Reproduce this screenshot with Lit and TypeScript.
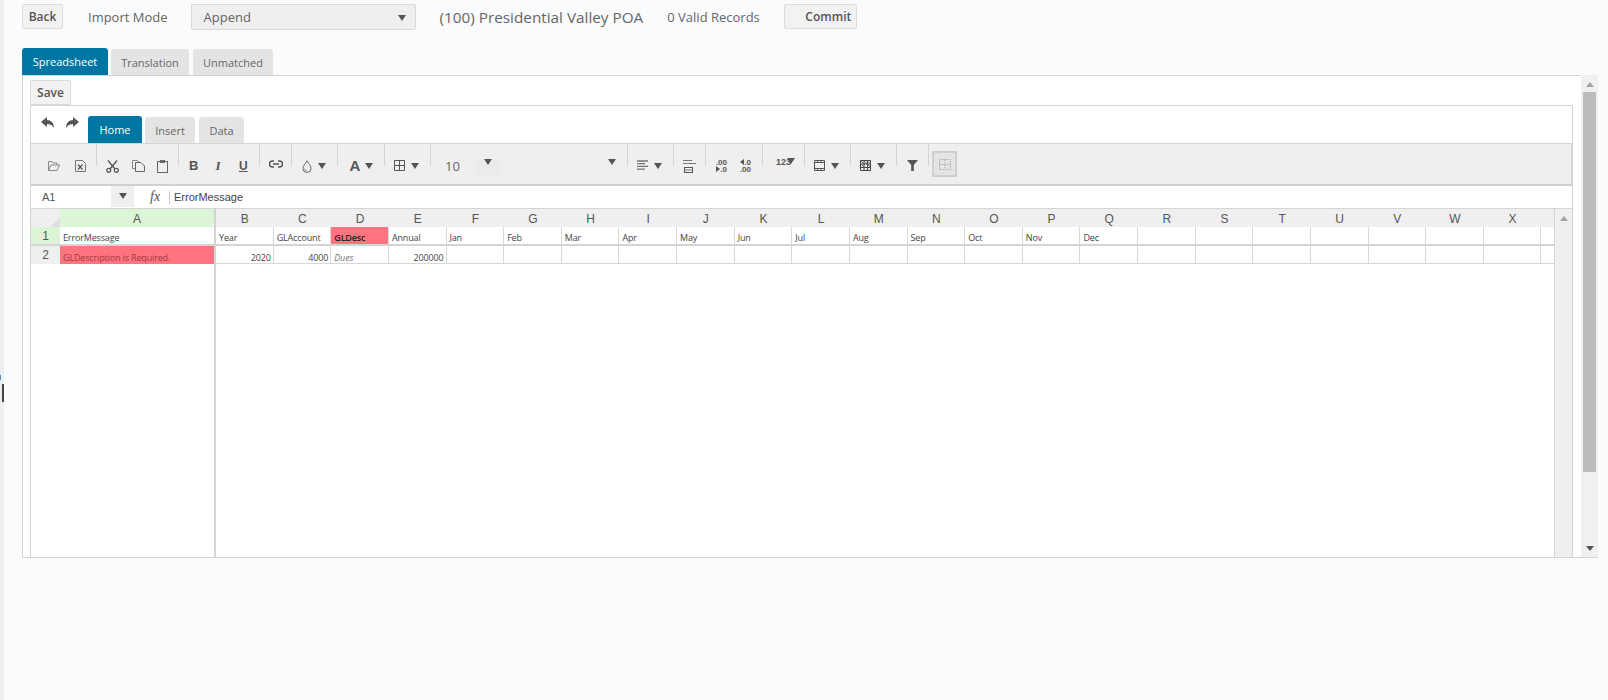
import { LitElement, html, css } from "lit";
import { customElement } from "lit/decorators.js";

const caret = html`<svg class="ic" width="8" height="6" viewBox="0 0 8 6"><path d="M0 0H8L4 6Z" fill="#555"/></svg>`;
const folder = html`<svg class="ic" width="12" height="12" viewBox="0 0 12 12"><path d="M.5 10.5V1.5H4L5 3H9V5M.5 10.5L3 5H11.5L9 10.5Z" fill="none" stroke="#888"/></svg>`;
const excel = html`<svg class="ic" width="11" height="12" viewBox="0 0 11 12"><path d="M.5.5H7.5L10.5 3.5V11.5H.5Z" fill="none" stroke="#777"/><path d="M3 4.5L7.5 9.5M7.5 4.5L3 9.5" stroke="#555" stroke-width="1.2"/></svg>`;
const scissors = html`<svg class="ic" width="13" height="13" viewBox="0 0 13 13"><path d="M2 .5L9 9M11 .5L4 9" stroke="#555" stroke-width="1.3"/><circle cx="2.7" cy="10.3" r="2" fill="none" stroke="#555" stroke-width="1.2"/><circle cx="10.3" cy="10.3" r="2" fill="none" stroke="#555" stroke-width="1.2"/></svg>`;
const copy = html`<svg class="ic" width="13" height="12" viewBox="0 0 13 12"><path d="M4 8.5H.5V.5H5.5L7 2" fill="none" stroke="#888"/><path d="M3.5 2.5H9L12.5 6V11.5H3.5Z" fill="none" stroke="#666"/></svg>`;
const paste = html`<svg class="ic" width="11" height="13" viewBox="0 0 11 13"><rect x=".5" y="1.5" width="10" height="11" fill="none" stroke="#666"/><rect x="3" y="0" width="5" height="3" fill="#666"/></svg>`;
const link = html`<svg class="ic" width="14" height="8" viewBox="0 0 14 8"><path d="M5 1H3.5A3 3 0 0 0 3.5 7H5M9 1H10.5A3 3 0 0 1 10.5 7H9M4 4H10" fill="none" stroke="#555" stroke-width="1.5"/></svg>`;
const drop = html`<svg class="ic" width="10" height="13" viewBox="0 0 10 13"><path d="M5 .8C3.5 3.5 1 5.5 1 8.5A4 4 0 0 0 9 8.5C9 5.5 6.5 3.5 5 .8Z" fill="none" stroke="#666"/><path d="M2.5 8.5A2.5 2.5 0 0 0 5 11" fill="none" stroke="#999"/></svg>`;
const borders = html`<svg class="ic" width="11" height="11" viewBox="0 0 11 11"><path d="M.5.5H10.5V10.5H.5ZM5.5.5V10.5M.5 5.5H10.5" fill="none" stroke="#555"/></svg>`;
const align = html`<svg class="ic" width="11" height="10" viewBox="0 0 11 10"><path d="M0 1H11M0 3.7H8M0 6.4H11M0 9.1H8" stroke="#777" stroke-width="1.3"/></svg>`;
const wrap = html`<svg class="ic" width="13" height="13" viewBox="0 0 13 13"><path d="M0 .5H9M0 3.5H13" stroke="#777"/><rect x="1.5" y="7.5" width="8" height="5" fill="none" stroke="#555"/><path d="M1.5 10H9.5" stroke="#777"/></svg>`;
const dec1 = html`<span class="dec"><span>.00</span><span><i class="tri r"></i>.0</span></span>`;
const dec2 = html`<span class="dec"><span><i class="tri l"></i>.0</span><span>.00</span></span>`;
const table1 = html`<svg class="ic" width="11" height="11" viewBox="0 0 11 11"><path d="M.5.5H10.5V10.5H.5Z" fill="none" stroke="#555"/><path d="M.5 2.5H10.5M.5 8.5H10.5M3.5 8.5V10.5M7 8.5V10.5M3.5.5V2.5M7 .5V2.5" stroke="#555"/></svg>`;
const table2 = html`<svg class="ic" width="11" height="11" viewBox="0 0 11 11"><path d="M.5.5H10.5V10.5H.5ZM.5 4H10.5M.5 7.5H10.5M4 .5V10.5M7.5 .5V10.5" fill="none" stroke="#444"/><path d="M1 1L4 4M4 1L7.5 4M7.5 1L10.5 4M1 4L4 7.5M7.5 4L10.5 7.5" stroke="#666"/></svg>`;
const filter = html`<svg class="ic" width="11" height="11" viewBox="0 0 11 11"><path d="M0 0H11L6.8 5V11H4.2V5Z" fill="#555"/></svg>`;
const freeze = html`<svg width="12" height="11" viewBox="0 0 12 11"><path d="M.5.5H11.5V10.5H.5ZM.5 5.5H11.5M6 .5V10.5" fill="none" stroke="#b0b0b0" stroke-dasharray="1.5 1"/></svg>`;
const back = html`<svg width="13" height="11" viewBox="0 0 13 11"><path d="M0 5L6 0V3C10 3 13 6 13 11C11 8 9 7 6 7V10Z" fill="#555"/></svg>`;
const forward = html`<svg width="13" height="11" viewBox="0 0 13 11"><path d="M13 5L7 0V3C3 3 0 6 0 11C2 8 4 7 7 7V10Z" fill="#555"/></svg>`;

const t = (c: string, cls: string) => html`<span class=${cls}>${c}</span>`;

interface Group { w: number; pad: number; gap: number; items: unknown[]; }
const groups: Group[] = [
  { w: 65, pad: 17, gap: 15, items: [folder, excel] },
  { w: 82, pad: 9, gap: 12.5, items: [scissors, copy, paste] },
  { w: 81, pad: 10, gap: 17, items: [t("B", "g b"), t("I", "g i"), t("U", "g u")] },
  { w: 32, pad: 9, gap: 0, items: [link] },
  { w: 46, pad: 10, gap: 6, items: [drop, caret] },
  { w: 47, pad: 10, gap: 3, items: [t("A", "g a"), caret] },
  { w: 46, pad: 9, gap: 6, items: [borders, caret] },
  { w: 197, pad: 14, gap: 0, items: [t("10", "size"), html`<span class="sizebox">${caret}</span>`, html`<span class="fontcaret">${caret}</span>`] },
  { w: 46, pad: 9, gap: 6, items: [align, caret] },
  { w: 32, pad: 9, gap: 0, items: [wrap] },
  { w: 57, pad: 10, gap: 13, items: [dec1, dec2] },
  { w: 42, pad: 13, gap: 0, items: [html`<span class="num">123<span class="numcaret">${caret}</span></span>`] },
  { w: 46, pad: 9, gap: 6, items: [table1, caret] },
  { w: 46, pad: 9, gap: 6, items: [table2, caret] },
  { w: 32, pad: 10, gap: 0, items: [filter] },
];

const letters = "BCDEFGHIJKLMNOPQRSTUVWX".split("");
const r1 = ["Year", "GLAccount", "GLDesc", "Annual", "Jan", "Feb", "Mar", "Apr", "May", "Jun", "Jul", "Aug", "Sep", "Oct", "Nov", "Dec"];

@customElement("app-root")
export class AppRoot extends LitElement {
  static styles = css`
    :host { display: flex; height: 700px; background: #fafbfd; color: #555; font-family: "Open Sans", sans-serif; overflow: hidden; }
    * { box-sizing: border-box; }
    .strip { width: 4px; background: #eeeeee; flex: none; display: flex; flex-direction: column; }
    .m1 { width: 1px; height: 5px; margin-top: 375px; background: #4a9ad4; }
    .m2 { width: 2px; height: 18px; margin: 4px 0 0 2px; background: #444; }
    .main { margin-left: 18px; width: 1576px; flex: none; }
    .top { display: flex; align-items: center; height: 25px; margin-top: 4px; }
    .btn { height: 25px; background: #f2f2f2; border: 1px solid #dcdcdc; border-radius: 2px; font-size: 12px; font-weight: 600; color: #555; display: flex; align-items: center; justify-content: center; }
    .back { width: 41px; }
    .lbl { font-size: 13px; color: #666; margin-left: 25px; }
    .select { width: 225px; height: 26px; margin: 0 0 0 23px; background: #efefef; border: 1px solid #d8d8d8; border-radius: 2px; font-size: 13px; padding: 0 9px 0 12px; display: flex; align-items: center; justify-content: space-between; color: #666; }
    .title { font-size: 15.3px; margin-left: 24px; color: #666; }
    .valid { font-size: 13px; margin-left: 24px; color: #666; }
    .commit { width: 73px; margin-left: 24px; padding-left: 16px; height: 25px; }
    .tabs { display: flex; align-items: flex-end; gap: 3px; height: 46px; }
    .tab { height: 26px; background: #e4e4e4; border-radius: 3px 3px 0 0; font-size: 11px; color: #666; display: flex; align-items: center; justify-content: center; }
    .tab.on { height: 27px; background: #0077a3; color: #fff; }
    .next { margin-left: 1px; }
    .w86 { width: 86px; } .w78 { width: 78px; } .w80 { width: 80px; }
    .w54 { width: 54px; } .w50 { width: 50px; } .w45 { width: 45px; }
    .panelwrap { display: flex; height: 483px; border-bottom: 1px solid #d4d4d4; }
    .panel { width: 1559px; border-top: 1px solid #d4d4d4; border-left: 1px solid #d4d4d4; padding: 4px 8px 0 7px; display: flex; flex-direction: column; background: #fff; }
    .vs { width: 17px; background: #f0f0f0; display: flex; flex-direction: column; align-items: center; }
    .up { width: 0; height: 0; border: 4px solid transparent; border-top: 0; border-bottom: 5px solid #a3a3a3; }
    .dn { width: 0; height: 0; border: 4px solid transparent; border-bottom: 0; border-top: 5px solid #555; }
    .vs .up { margin-top: 7px; }
    .thumb { width: 13px; height: 380px; margin-top: 5px; background: #bcbcbc; }
    .vs .dn { margin-top: auto; margin-bottom: 6px; }
    .save { width: 41px; flex: none; border-radius: 2px 2px 0 0; height: 25px; }
    .sheet { flex: 1; min-height: 0; border: 1px solid #d4d4d4; border-bottom: 0; display: flex; flex-direction: column; margin-top: 0; }
    .ribbon { height: 37px; flex: none; display: flex; align-items: flex-end; }
    .hist { display: flex; gap: 12px; margin: 0 9px 15px 10px; padding-bottom: 0; }
    .rtabs { display: flex; align-items: flex-end; gap: 3px; }
    .rtab { height: 26px; background: #e4e4e4; border-radius: 3px 3px 0 0; font-size: 11px; color: #666; display: flex; align-items: center; justify-content: center; }
    .rtab.on { height: 27px; background: #0077a3; color: #fff; }
    .tools { height: 43px; flex: none; display: flex; background: #efefef; border-top: 1px solid #d4d4d4; border-bottom: 2px solid #d0d0d0; border-right: 1px solid #d8d8d8; }
    .grp { height: 22px; padding-top: 16px; display: flex; align-items: flex-start; flex: none; border-left: 1px solid #d4d4d4; }
    .grp:first-child { border-left: 0; }
    .grp.last { width: 32px; padding-top: 0; }
    .ic { display: block; flex: none; }
    .ic[width="8"] { margin-top: 3px; }
    .g { font: 12px "Liberation Sans", sans-serif; color: #555; line-height: 12px; width: 8px; text-align: center; }
    .g.b { font-weight: 700; font-size: 13px; }
    .g.i { font-style: italic; font-family: "Liberation Serif", serif; font-weight: 700; font-size: 13px; }
    .g.u { text-decoration: underline; font-weight: 700; }
    .g.a { font-weight: 700; font-size: 15px; width: 14px; }
    .size { font: 13px "Open Sans", sans-serif; color: #666; width: 31px; line-height: 12px; }
    .sizebox { width: 24px; height: 16px; margin-top: -1px; background: #ebebeb; display: flex; justify-content: center; padding-top: 0; }
    .sizebox .ic, .fontcaret .ic { margin-top: 0; }
    .fontcaret { margin-left: 108px; margin-top: -1px; }
    .dec { font: 700 8px/7px "Liberation Sans", sans-serif; color: #555; display: flex; flex-direction: column; align-items: flex-end; width: 11px; margin-top: -1px; }
    .tri { display: inline-block; width: 0; height: 0; border: 3px solid transparent; }
    .tri.r { border-left: 4px solid #555; border-right: 0; }
    .tri.l { border-right: 4px solid #555; border-left: 0; }
    .num { font: 700 9px/10px "Liberation Sans", sans-serif; color: #555; display: flex; margin-top: -3px; }
    .numcaret { margin-left: -4px; }
    .numcaret .ic { margin-top: 1px; }
    .fz { height: 26px; width: 25px; margin: 7px 0 0 3px; background: #e4e4e4; border: 2px solid #cfcfcf; display: flex; align-items: center; justify-content: center; flex: none; }
    .fbar { height: 23px; flex: none; display: flex; align-items: center; border-bottom: 1px solid #d4d4d4; font: 11px "Liberation Sans", sans-serif; color: #444; }
    .name { width: 80px; padding-left: 11px; height: 22px; display: flex; align-items: center; color: #555; }
    .namedd { width: 23px; height: 21px; margin-top: -2px; background: #efefef; display: flex; align-items: center; justify-content: center; }
    .namedd .ic { margin: 0; }
    .fx { font: italic 14px "Liberation Serif", serif; margin-left: 16px; width: 19px; color: #555; }
    .fval { border-left: 1px solid #ccc; padding-left: 4px; height: 13px; line-height: 13px; font-size: 11px; }
    .grid { flex: 1; min-height: 0; display: flex; }
    .frozen { width: 185px; flex: none; border-right: 2px solid #d4d4d4; }
    .rest { flex: 1; min-width: 0; overflow: hidden; }
    .row { display: flex; height: 19px; border-bottom: 2px solid #d4d4d4; }
    .row.hd { height: 18px; border: 0; background: #efefef; }
    .row.r2 { height: 18px; border-bottom: 1px solid #d8d8d8; }
    .frozen .row.r2 { border-bottom: 0; }
    .rh { width: 29px; flex: none; background: #efefef; font: 12px "Liberation Sans", sans-serif; display: flex; align-items: center; justify-content: center; color: #555; }
    .rh.sel { background: #dcf5d6; }
    .corner { width: 29px; flex: none; background: linear-gradient(135deg, transparent 80%, #e0e0e0 80%); }
    .ch { font: 12px "Liberation Sans", sans-serif; color: #555; display: flex; align-items: center; justify-content: center; flex: 0 0 57.64px; padding-top: 2px; }
    .ch.a { flex: 1; background: #dcf5d6; }
    .c { flex: 0 0 57.64px; border-right: 1px solid #d8d8d8; font-size: 9px; letter-spacing: -0.15px; line-height: 12px; padding: 5px 2px 0 3px; color: #444; white-space: nowrap; overflow: hidden; }
    .r2 .c { padding-top: 6px; }
    .c.a { flex: 1; border: 0; padding-left: 3px; }
    .c.red { background: #ff747f; color: #9e3a42; }
    .c.d { color: #222; font-weight: 600; }
    .c.n { text-align: right; }
    .c.it { font-style: italic; color: #777; }
    .is { width: 18px; flex: none; margin-left: 0; background: #efefef; border-left: 1px solid #d4d4d4; display: flex; flex-direction: column; align-items: center; padding-top: 7px; }
  `;

  render() {
    const cols = [...letters, ""];
    return html`
      <div class="strip"><div class="m1"></div><div class="m2"></div></div>
      <div class="main">
        <div class="top">
          <div class="btn back">Back</div>
          <div class="lbl">Import Mode</div>
          <div class="select"><span>Append</span>${caret}</div>
          <div class="title">(100) Presidential Valley POA</div>
          <div class="valid">0 Valid Records</div>
          <div class="btn commit">Commit</div>
        </div>
        <div class="tabs">
          <div class="tab on w86">Spreadsheet</div>
          <div class="tab w78">Translation</div>
          <div class="tab w80 next">Unmatched</div>
        </div>
        <div class="panelwrap">
          <div class="panel">
            <div class="btn save">Save</div>
            <div class="sheet">
              <div class="ribbon">
                <div class="hist">${back}${forward}</div>
                <div class="rtabs">
                  <div class="rtab on w54">Home</div>
                  <div class="rtab w50">Insert</div>
                  <div class="rtab w45 next">Data</div>
                </div>
              </div>
              <div class="tools">
                ${groups.map(g => html`<div class="grp" style="width:${g.w}px;padding-left:${g.pad}px;gap:${g.gap}px">${g.items}</div>`)}
                <div class="grp last"><div class="fz">${freeze}</div></div>
              </div>
              <div class="fbar">
                <div class="name">A1</div>
                <div class="namedd">${caret}</div>
                <div class="fx">fx</div>
                <div class="fval">ErrorMessage</div>
              </div>
              <div class="grid">
                <div class="frozen">
                  <div class="row hd"><div class="corner"></div><div class="ch a">A</div></div>
                  <div class="row"><div class="rh sel">1</div><div class="c a">ErrorMessage</div></div>
                  <div class="row r2"><div class="rh">2</div><div class="c a red">GLDescription is Required.</div></div>
                </div>
                <div class="rest">
                  <div class="row hd">${cols.map(l => html`<div class="ch">${l}</div>`)}</div>
                  <div class="row">${cols.map((_, i) => html`<div class="c ${i === 2 ? "red d" : ""}">${r1[i] ?? ""}</div>`)}</div>
                  <div class="row r2">${cols.map((_, i) => {
                    if (i === 0) return html`<div class="c n">2020</div>`;
                    if (i === 1) return html`<div class="c n">4000</div>`;
                    if (i === 2) return html`<div class="c it">Dues</div>`;
                    if (i === 3) return html`<div class="c n">200000</div>`;
                    return html`<div class="c"></div>`;
                  })}</div>
                </div>
                <div class="is"><div class="up"></div></div>
              </div>
            </div>
          </div>
          <div class="vs"><div class="up"></div><div class="thumb"></div><div class="dn"></div></div>
        </div>
      </div>
    `;
  }
}
